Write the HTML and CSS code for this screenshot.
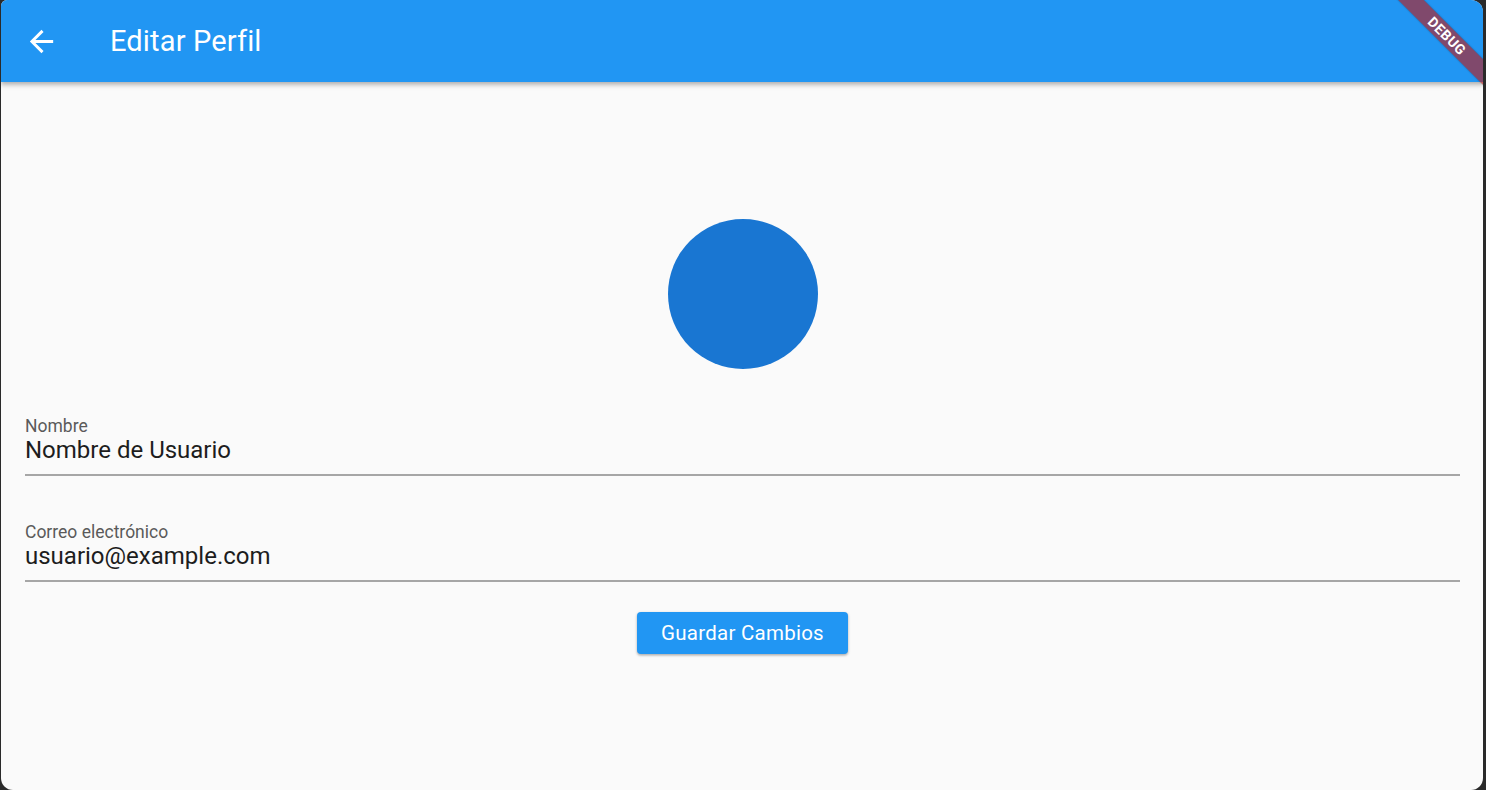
FILE: index.html
```html
<!DOCTYPE html>
<html lang="es">
<head>
<meta charset="utf-8">
<title>Editar Perfil</title>
<link rel="stylesheet" href="styles.css">
</head>
<body>
<div class="window">
  <header class="appbar">
    <button class="back" aria-label="Atrás">
      <svg viewBox="0 0 24 24" width="35" height="35"><path fill="#fff" d="M20 11H7.83l5.59-5.59L12 4l-8 8 8 8 1.41-1.41L7.83 13H20v-2z"/></svg>
    </button>
    <h1 class="title">Editar Perfil</h1>
  </header>
  <main class="content">
    <div class="avatar"></div>
    <div class="field field-first">
      <div class="label">Nombre</div>
      <div class="value">Nombre de Usuario</div>
    </div>
    <div class="field field-second">
      <div class="label">Correo electrónico</div>
      <div class="value">usuario@example.com</div>
    </div>
    <button class="save">Guardar Cambios</button>
  </main>
  <div class="banner">DEBUG</div>
</div>
</body>
</html>
```
FILE: styles.css
```css
html, body {
  margin: 0;
  padding: 0;
  height: 100%;
}
body {
  background: #2a2a2a;
  font-family: Roboto, "Liberation Sans", sans-serif;
  overflow: hidden;
}
.window {
  position: relative;
  margin-left: 1px;
  width: 1482px;
  height: 790px;
  background: #fafafa;
  border-radius: 6px 12px 12px 12px;
  overflow: hidden;
  display: flex;
  flex-direction: column;
}
.appbar {
  height: 82px;
  flex: none;
  background: #2196f3;
  display: flex;
  align-items: center;
  box-shadow: 0 2px 4px rgba(0,0,0,0.2), 0 4px 5px rgba(0,0,0,0.12);
  position: relative;
  z-index: 1;
}
.back {
  margin-left: 23px;
  width: 35px;
  height: 35px;
  padding: 0;
  border: 0;
  background: none;
  display: flex;
}
.title {
  margin: 0 0 0 51px;
  color: #fff;
  font-size: 29px;
  font-weight: 400;
  letter-spacing: 0.15px;
}
.content {
  flex: 1;
  display: flex;
  flex-direction: column;
  align-items: center;
  justify-content: center;
  padding: 0 23px 0 24px;
}
.avatar {
  width: 150px;
  height: 150px;
  border-radius: 50%;
  background: #1976d2;
  flex: none;
}
.field {
  align-self: stretch;
  border-bottom: 2px solid #a6a6a6;
  padding-bottom: 10px;
}
.field-first { margin-top: 47px; }
.field-second { margin-top: 46px; }
.label {
  font-size: 17.5px;
  line-height: 20px;
  color: #5a5a5a;
}
.value {
  font-size: 24px;
  line-height: 28px;
  color: #1d1d1d;
}
.save {
  margin-top: 30px;
  height: 42px;
  width: 211px;
  border: 0;
  border-radius: 4px;
  background: #2196f3;
  color: #fff;
  font-family: Roboto, "Liberation Sans", sans-serif;
  font-size: 20.5px;
  font-weight: 400;
  letter-spacing: 0.25px;
  box-shadow: 0 1px 3px rgba(0,0,0,0.25), 0 2px 2px rgba(0,0,0,0.1);
}
.banner {
  position: absolute;
  top: 27px;
  right: -64px;
  width: 200px;
  height: 18px;
  background: rgba(183, 28, 28, 0.63);
  color: #fff;
  font-size: 14px;
  font-weight: 700;
  line-height: 18px;
  text-align: center;
  letter-spacing: 0.5px;
  transform: rotate(45deg);
  box-shadow: 0 0 2px rgba(0,0,0,0.3);
  z-index: 2;
}
```
